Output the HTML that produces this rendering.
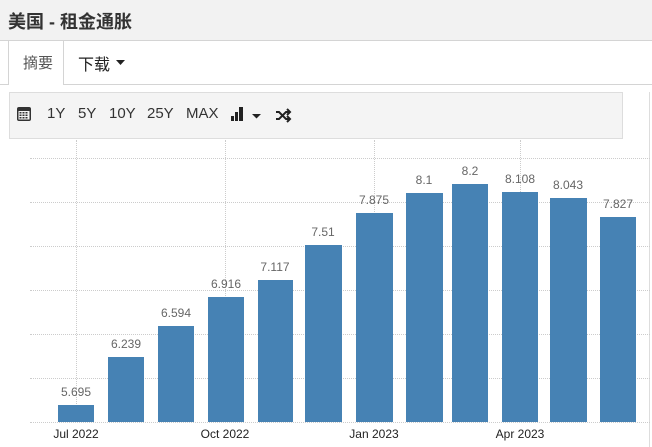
<!DOCTYPE html>
<html><head><meta charset="utf-8"><style>
body{margin:0;width:652px;height:447px;overflow:hidden;background:#fff;font-family:"Liberation Sans","Noto Sans CJK SC",sans-serif;position:relative}
.a{position:absolute}
.t{top:0;left:0;width:652px;height:40px;background:#f2f2f2;border-bottom:1px solid #d4d4d4}
.t span{position:absolute;left:8px;top:8px;font-size:18px;font-weight:bold;color:#333}
.lbl{font-size:12px;color:#666;text-align:center;width:60px}
.bar{background:#4682b4}
.xl{font-size:12px;color:#222;width:70px;text-align:center;top:427px}
.g{left:30px;width:620px;border-top:1px dotted #ccc;height:0}
.v{top:140px;height:282px;border-left:1px dotted #ccc;width:0}
.tb{top:105px;font-size:15px;color:#333}
</style></head><body>
<div class="a t"><span>美国 - 租金通胀</span></div>
<div class="a" style="left:0;top:84px;width:652px;border-top:1px solid #d4d4d4"></div>
<div class="a" style="left:8px;top:41px;width:54px;height:44px;background:#fff;border-left:1px solid #d4d4d4;border-right:1px solid #d4d4d4"></div>
<div class="a" style="left:23px;top:52px;font-size:15px;color:#555">摘要</div>
<div class="a" style="left:78px;top:51px;font-size:16px;color:#222">下载</div>
<svg class="a" style="left:116px;top:60px" width="9" height="6"><path d="M0 0h9L4.5 5z" fill="#222"/></svg>
<div class="a" style="left:9px;top:92px;width:612px;height:45px;background:#f4f4f4;border:1px solid #ddd"></div>
<svg class="a" style="left:16px;top:106px" width="16" height="16"><rect x="1" y="1" width="14" height="14" rx="2" fill="#333"/><rect x="2.5" y="5" width="11" height="8.5" fill="#f4f4f4"/><g fill="#333"><rect x="3.5" y="6" width="2" height="1.5"/><rect x="6.5" y="6" width="2" height="1.5"/><rect x="9.5" y="6" width="2" height="1.5"/><rect x="3.5" y="8.5" width="2" height="1.5"/><rect x="6.5" y="8.5" width="2" height="1.5"/><rect x="9.5" y="8.5" width="2" height="1.5"/><rect x="3.5" y="11" width="2" height="1.5"/><rect x="6.5" y="11" width="2" height="1.5"/><rect x="9.5" y="11" width="2" height="1.5"/></g></svg>
<div class="a tb" style="left:47px">1Y</div>
<div class="a tb" style="left:78px">5Y</div>
<div class="a tb" style="left:109px">10Y</div>
<div class="a tb" style="left:147px">25Y</div>
<div class="a tb" style="left:186px">MAX</div>
<svg class="a" style="left:230px;top:104px" width="70" height="20"><rect x="1" y="12" width="3" height="5" fill="#222"/><rect x="5" y="8" width="3" height="9" fill="#222"/><rect x="9" y="3" width="4" height="14" fill="#222"/><path d="M22 10h9l-4.5 4.5z" fill="#222"/><path d="M46 8h3l7 7h3M46 15h3l7-7h3M57 5l3 3-3 3M57 12l3 3-3 3" stroke="#222" stroke-width="2" fill="none"/></svg>
<div class="a" style="left:649px;top:92px;height:355px;border-left:1px solid #ddd"></div>
<div class="a g" style="top:158px"></div><div class="a g" style="top:202px"></div><div class="a g" style="top:246px"></div><div class="a g" style="top:290px"></div><div class="a g" style="top:334px"></div><div class="a g" style="top:378px"></div><div class="a g" style="top:422px"></div>
<div class="a v" style="left:76px"></div><div class="a v" style="left:225px"></div><div class="a v" style="left:374px"></div><div class="a v" style="left:520px"></div>
<div class="a bar" style="left:58px;top:405px;width:36px;height:17px"></div><div class="a lbl" style="left:46px;top:385px">5.695</div>
<div class="a bar" style="left:108px;top:357px;width:36px;height:65px"></div><div class="a lbl" style="left:96px;top:337px">6.239</div>
<div class="a bar" style="left:158px;top:326px;width:36px;height:96px"></div><div class="a lbl" style="left:146px;top:306px">6.594</div>
<div class="a bar" style="left:208px;top:297px;width:36px;height:125px"></div><div class="a lbl" style="left:196px;top:277px">6.916</div>
<div class="a bar" style="left:258px;top:280px;width:35px;height:142px"></div><div class="a lbl" style="left:245px;top:260px">7.117</div>
<div class="a bar" style="left:305px;top:245px;width:37px;height:177px"></div><div class="a lbl" style="left:293px;top:225px">7.51</div>
<div class="a bar" style="left:356px;top:213px;width:37px;height:209px"></div><div class="a lbl" style="left:344px;top:193px">7.875</div>
<div class="a bar" style="left:406px;top:193px;width:37px;height:229px"></div><div class="a lbl" style="left:394px;top:173px">8.1</div>
<div class="a bar" style="left:452px;top:184px;width:36px;height:238px"></div><div class="a lbl" style="left:440px;top:164px">8.2</div>
<div class="a bar" style="left:502px;top:192px;width:36px;height:230px"></div><div class="a lbl" style="left:490px;top:172px">8.108</div>
<div class="a bar" style="left:550px;top:198px;width:37px;height:224px"></div><div class="a lbl" style="left:538px;top:178px">8.043</div>
<div class="a bar" style="left:600px;top:217px;width:36px;height:205px"></div><div class="a lbl" style="left:588px;top:197px">7.827</div>
<div class="a xl" style="left:41px">Jul 2022</div>
<div class="a xl" style="left:190px">Oct 2022</div>
<div class="a xl" style="left:339px">Jan 2023</div>
<div class="a xl" style="left:485px">Apr 2023</div>
</body></html>
